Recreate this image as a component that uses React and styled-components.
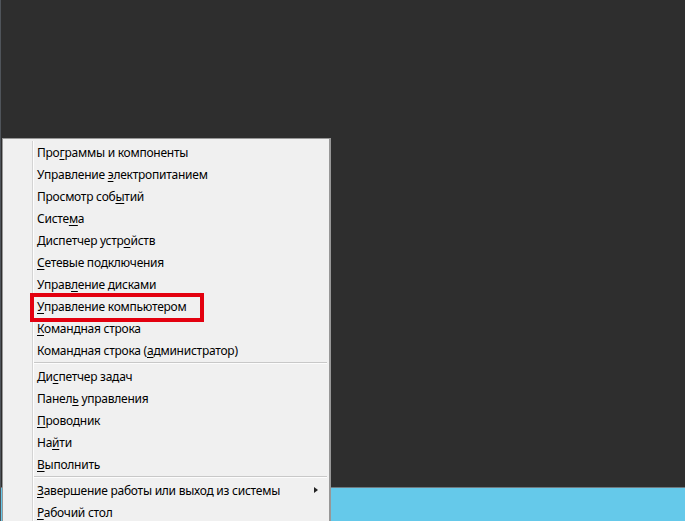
import React from "react";
import styled, { createGlobalStyle } from "styled-components";

const GlobalStyle = createGlobalStyle`
  html, body {
    margin: 0;
    padding: 0;
    background: #2e2e2e;
    overflow: hidden;
  }
`;

const MENU_GROUPS = [
  [
    { pre: "Про", key: "г", post: "раммы и компоненты" },
    { pre: "Управление ", key: "э", post: "лектропитанием" },
    { pre: "Просмотр соб", key: "ы", post: "тий" },
    { pre: "Систе", key: "м", post: "а" },
    { pre: "Диспетчер устр", key: "о", post: "йств" },
    { pre: "", key: "С", post: "етевые подключения" },
    { pre: "Управ", key: "л", post: "ение дисками" },
    { pre: "", key: "У", post: "правление компьютером" },
    { pre: "", key: "К", post: "омандная строка" },
    { pre: "Командная строка (", key: "а", post: "дминистратор)" }
  ],
  [
    { pre: "Ди", key: "с", post: "петчер задач" },
    { pre: "Панел", key: "ь", post: " управления" },
    { pre: "", key: "П", post: "роводник" },
    { pre: "На", key: "й", post: "ти" },
    { pre: "", key: "В", post: "ыполнить" }
  ],
  [
    { pre: "", key: "З", post: "авершение работы или выход из системы", submenu: true },
    { pre: "", key: "Р", post: "абочий стол" }
  ]
];

const Desktop = styled.div`
  position: relative;
  width: 685px;
  height: 521px;
  box-sizing: border-box;
  border-left: 1px solid #4f545a;
  display: flex;
  flex-direction: column;
  overflow: hidden;
  font-family: "Noto Sans", "Liberation Sans", sans-serif;
`;

const Wallpaper = styled.div`
  flex: 1;
  background: #2e2e2e;
`;

const Taskbar = styled.div`
  height: 33px;
  background: #65c9ea;
  border-top: 1px solid #6e7a80;
`;

const Menu = styled.div`
  position: absolute;
  left: 1px;
  top: 138px;
  width: 329px;
  box-sizing: border-box;
  padding: 2px 0;
  background: #f0f0f0;
  border: 1px solid #979797;
  border-right-width: 2px;
  color: #000;
`;

const Row = styled.div`
  display: flex;
  align-items: stretch;
  height: ${props => (props.separator ? "4px" : "22px")};
`;

const Gutter = styled.div`
  width: 29px;
  flex-shrink: 0;
  border-right: 1px solid #d4d4d4;
  box-shadow: 1px 0 0 #fdfdfd;
`;

const Label = styled.div`
  flex: 1;
  display: flex;
  align-items: center;
  padding-left: 4px;
  font-size: 12px;
  letter-spacing: -0.25px;
  white-space: pre;
`;

const Key = styled.span`
  text-decoration: underline;
  text-underline-offset: 2px;
`;

const Arrow = styled.div`
  width: 0;
  height: 0;
  align-self: center;
  margin-right: 11px;
  border-top: 3.5px solid transparent;
  border-bottom: 3.5px solid transparent;
  border-left: 4px solid #222;
`;

const SeparatorLine = styled.div`
  flex: 1;
  margin: 1px 2px 0 1px;
  height: 1px;
  background: #c8c8c8;
  box-shadow: 0 1px 0 #fcfcfc;
`;

const Highlight = styled.div`
  position: absolute;
  left: 27px;
  top: 154px;
  width: 174px;
  height: 29px;
  box-sizing: border-box;
  border: 4px solid #e3000f;
  pointer-events: none;
`;

const MenuItem = ({ item }) => (
  <Row>
    <Gutter />
    <Label>
      <span>
        {item.pre}
        <Key>{item.key}</Key>
        {item.post}
      </span>
    </Label>
    {item.submenu && <Arrow />}
  </Row>
);

const Separator = () => (
  <Row separator>
    <Gutter />
    <SeparatorLine />
  </Row>
);

const App = () => (
  <>
    <GlobalStyle />
    <Desktop>
      <Wallpaper />
      <Taskbar />
      <Menu>
        {MENU_GROUPS.map((group, gi) => (
          <React.Fragment key={gi}>
            {gi > 0 && <Separator />}
            {group.map((item, ii) => (
              <MenuItem key={ii} item={item} />
            ))}
          </React.Fragment>
        ))}
        <Highlight />
      </Menu>
    </Desktop>
  </>
);

export default App;
